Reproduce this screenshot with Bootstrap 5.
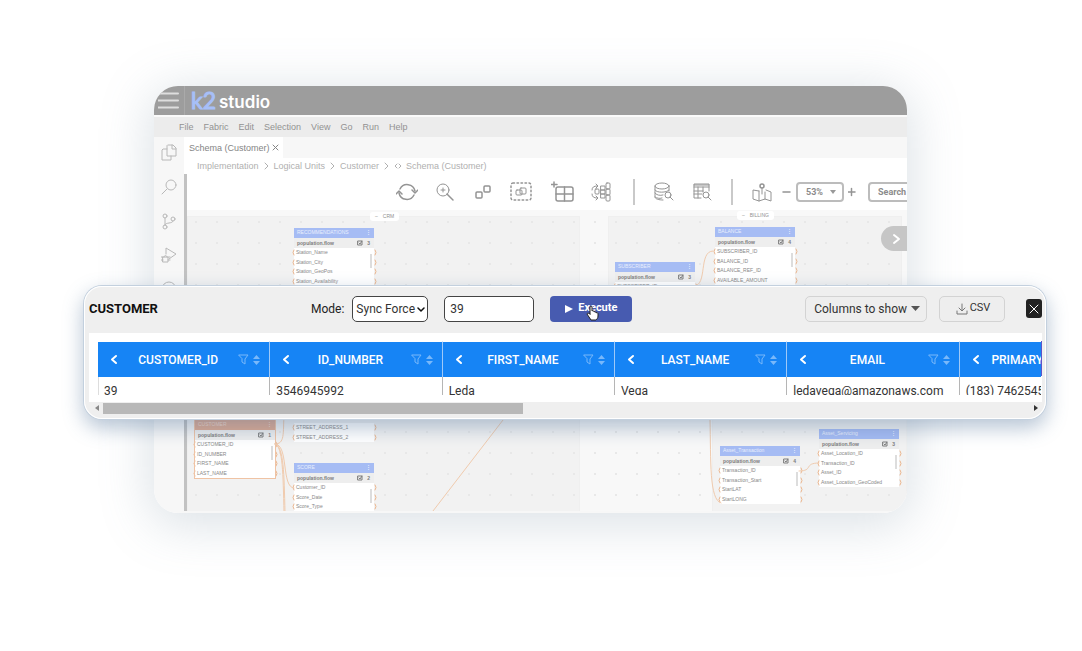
<!DOCTYPE html>
<html lang="en">
<head>
<meta charset="utf-8">
<meta name="viewport" content="width=device-width, initial-scale=1">
<title>k2 studio - Schema (Customer)</title>
<link href="https://cdn.jsdelivr.net/npm/bootstrap@5.3.0/dist/css/bootstrap.min.css" rel="stylesheet">
<style>
  body { background: #fff; font-family: Roboto, sans-serif; overflow-x: hidden; }
  svg { display: block; fill: none; stroke: currentColor; stroke-width: 1; stroke-linecap: round; stroke-linejoin: round; }
  button, input, select { font-family: inherit; }
  .stage { padding: 86px 0 138px; }

  /* faded studio window */
  .studio-glow { border-radius: 24px; margin: 0 175px 0 154px; box-shadow: 0 8px 50px 4px rgba(115, 140, 160, .26); }
  .studio { height: 427px; border-radius: 24px; overflow: hidden; background: #f7f7f7; font-family: "Liberation Sans", sans-serif; font-size: 9px; line-height: 12px; color: #929292; }
  .topbar { height: 29px; background: #9d9d9d; color: #fff; }
  .burger { width: 31px; border: solid #aaa; color: #dedede; border-width: 0 1px 0 0; background: none; padding: 0 0 0 4px; }
  .logo-k { font: 400 23px/29px Lato, sans-serif; color: #a7bff8; -webkit-text-stroke: 1px #a7bff8; }
  .logo-s { font: 600 17px/32px Inter, sans-serif; color: #fff; }
  .logo-row { padding-left: 6px; gap: 3px; }
  .menubar { height: 22px; background: #ececec; border-top: 2px solid #fafafa; padding-left: 25px; gap: 10px; }
  .menubar a, .crumbs a { color: inherit; text-decoration: none; }
  .rail { width: 30px; padding-top: 6px; gap: 13px; color: #b8b8b8; }
  .rail button { border: 0; background: none; padding: 0; color: inherit; }
  .main-col { min-width: 0; }
  .tabstrip { height: 21px; }
  .tab-on { background: #fff; width: 99px; padding: 0 4px 0 5px; color: #858585; }
  .crumbs { height: 16px; padding-left: 13px; color: #b0b0b0; gap: 5px; background: #fff; }
  .work { border-left: 3px solid #c2c2c2; }
  .tools { height: 36px; background: #fff; padding-left: 206px; color: #949494; gap: 6px; }
  .tools button { border: 0; background: none; padding: 0; color: inherit; display: flex; justify-content: center; }
  .icon-row { gap: 10px; }
  .zoom-row { gap: 4px; }
  .icon-btn { width: 28px; }
  .step-btn { width: 10px; }
  .rule { width: 2px; height: 26px; background: #c9c9c9; margin: 0 5px; }
  .zoom-sel, .find { height: 20px; border: 2px solid #bcbcbc; border-radius: 4px; background: #fff; color: #8c8c8c; font: 700 9px/12px Roboto, sans-serif; padding: 0 8px; }
  .zoom-sel { width: 48px; appearance: none; }
  .find { width: 80px; }
  .find::placeholder { color: #8c8c8c; opacity: 1; }
  .caret { right: 8px; top: 8px; border: 3px solid transparent; border-top: 4px solid #999; border-bottom: 0; }

  /* schema canvas: free placement of entity nodes */
  .board { height: 301px; background: #f8f8f8; }
  .zone { background: #f2f2f2; border: 1px solid #efefef; }
  .zone-a { left: 0; top: 6px; width: 393px; height: 300px; }
  .zone-b { left: 421px; top: 6px; right: 5px; height: 160px; }
  .zone-c { left: 525px; top: 166px; right: 0; height: 140px; }
  .dots { background: radial-gradient(circle at 9px 12px, #e8e8e8 0, #e8e8e8 1px, transparent 1px) 0 0 / 21px 21px; }
  .zone-tag { background: #fff; border-radius: 3px; font: 5px/9px "Liberation Sans", sans-serif; color: #909090; padding: 0 5px; gap: 5px; height: 9px; }
  .entity { width: 80px; background: #fff; font: 5px/9px "Liberation Sans", sans-serif; color: #888; }
  .entity-head { height: 10px; background: #a6bcf4; color: #e9effd; padding: 0 3px; }
  .entity-flow { height: 10px; background: #eee; font-weight: 700; color: #7d7d7d; padding: 0 4px 0 3px; }
  .entity-rows { height: 38px; }
  .entity-rows div { padding-left: 2px; flex: 0 0 25%; display: flex; align-items: center; justify-content: space-between; }
  .entity-part .entity-rows { height: 19px; }
  .entity-part .entity-rows div { flex-basis: 50%; }
  .entity-part .entity-head, .entity-part .entity-flow, .entity-part .entity-bar { display: none !important; }
  .entity-rows svg { color: #ebb68f; margin: 0 -3px; }
  .entity-rows svg:first-child { margin: 0 1px 0 -4px; }
  .entity-bar { right: 2px; bottom: 18px; width: 2px; height: 14px; background: #ddd; }
  .entity-hot { outline: 1px solid #efc3a4; }
  .entity-hot .entity-head { background: #dfaa92; color: #f3d6c6; }
  .edges { left: 0; top: 0; color: #f0cbae; }
  .next-btn { right: 0; top: 16px; width: 26px; height: 25px; border: 0; border-radius: 13px 0 0 13px; background: #c6c6c6; color: #fff; padding: 0 0 0 11px; }

  /* data viewer laid over the window */
  .viewer { left: 84px; right: 36px; top: 286px; height: 133px; padding: 0 4px 0 5px; background: #efefef; border-radius: 18px; box-shadow: inset 0 0 0 1px #fff, 0 0 0 1px #c3d0de, 0 8px 20px 1px rgba(75, 110, 150, .4); overflow: hidden; }
  .viewer-head { height: 47px; padding-bottom: 2px; font-size: 12px; color: #222; }
  .viewer-head h1 { font-size: 13px; line-height: 18px; font-weight: 700; color: #111; width: 222px; }
  .mode-sel, .key-box { height: 26px; border: 1px solid #444; border-radius: 5px; background: #fff; color: #333; font-size: 12px; padding: 0 5px; }
  .mode-sel { width: 76px; appearance: none; padding: 0 0 0 3px; }
  .mode-tick { right: 3px; top: 10px; color: #111; }
  .key-box { width: 90px; margin: 0 16px; }
  .run-btn { width: 82px; height: 26px; border: 0; border-radius: 4px; background: #475bb0; color: #fff; font-size: 11px; font-weight: 700; padding: 0; gap: 4px; }
  .hand { left: 36px; top: 9px; }
  .ghost { height: 26px; border: 1px solid #d3d3d3; border-radius: 5px; background: #eee; color: #333; padding: 0 6px 0 8px; gap: 4px; font-size: 12px; }
  .csv-btn { width: 66px; margin: 0 21px 0 12px; gap: 2px; font-size: 11px; }
  .close-btn { width: 16px; height: 19px; border: 0; border-radius: 3px; background: #222; color: #fff; padding: 0; }
  .sheet { background: #fff; padding: 8px 0 0 9px; height: 69px; }
  .sheet-clip { height: 54px; overflow: hidden; border-right: 1px solid; border-image: linear-gradient(#5d55c9 35px, transparent 35px) 1; }
  .sheet table { table-layout: fixed; width: 1034px; font-size: 12px; color: #333; margin: 0; border-collapse: separate; border-spacing: 0; }
  .sheet th { height: 36px; padding: 0; background: #1684f5; color: #fff; font-weight: 500; border-right: 1px solid #9fc9f8; border-top: 1px solid #fff; }
  .sheet th button { border: 0; background: none; color: #fff; padding: 0; }
  .col-in { padding: 0 9px 0 12px; }
  .sheet th .soft { color: #79b8fa; }
  .sheet td { height: 28px; padding: 0 6px; border-right: 1px solid #b5b5b5; }
  .sheet td:first-child { box-shadow: inset 1px 0 #ddd; }
  .scroller { height: 12px; padding: 0 4px 0 6px; }
  .scroller i { border: 3px solid transparent; border-width: 3px 4px; }
  .to-left { border-right-color: #888 !important; border-left-width: 0 !important; }
  .to-right { border-left-color: #333 !important; border-right-width: 0 !important; }
  .thumb { width: 100%; max-width: 420px; height: 11px; background: #b8b8b8; margin-left: 4px; }
</style>
</head>
<body>
<main class="stage position-relative">
  <div class="studio-glow">
  <section class="studio d-flex flex-column">
    <header class="topbar d-flex">
      <button class="burger" aria-label="Menu"><svg width="21" height="29"><path d="M0 7.500h20M0 14.500h20M0 21.500h20" stroke-width="2"/></svg></button>
      <div class="logo-row d-flex"><span class="logo-k">k2</span><span class="logo-s">studio</span></div>
    </header>
    <nav class="menubar d-flex align-items-center">
      <a href="#">File</a><a href="#">Fabric</a><a href="#">Edit</a><a href="#">Selection</a><a href="#">View</a><a href="#">Go</a><a href="#">Run</a><a href="#">Help</a>
    </nav>
    <div class="d-flex flex-fill">
      <aside class="rail d-flex flex-column align-items-center flex-shrink-0">
        <button aria-label="Files"><svg width="16" height="21"><path d="M7 2h5l3 3v8H6V3zM11 2v4h4M6 6H2L1 7v10h9v-4"/></svg></button>
        <button aria-label="Search"><svg width="16" height="21"><circle cx="10" cy="8" r="5"/><path d="M6 12l-5 5"/></svg></button>
        <button aria-label="Branches"><svg width="16" height="21"><circle cx="4" cy="5" r="2"/><circle cx="12" cy="8" r="2"/><circle cx="4" cy="16" r="2"/><path d="M4 7v7M12 10c0 3-8 1-8 4"/></svg></button>
        <button aria-label="Debug"><svg width="16" height="21"><path d="M5 9V3l10 6-7 5"/><path d="M2 12h5v5H2zM0 12h2M0 15h2M7 12h2M7 15h2M3 12c0-2 3-2 3 0"/></svg></button>
        <button aria-label="Extensions"><svg width="16" height="21"><circle cx="8" cy="10" r="7"/></svg></button>
      </aside>
      <div class="main-col flex-fill">
        <div class="tabstrip d-flex"><div class="tab-on d-flex align-items-center justify-content-between"><span>Schema (Customer)</span><svg width="7" height="7"><path d="M1 1l5 5M6 1l-5 5"/></svg></div></div>
        <nav class="crumbs d-flex align-items-center">
          <a href="#">Implementation</a><svg width="5" height="8"><path d="M1 1l3 3-3 3"/></svg>
          <a href="#">Logical Units</a><svg width="5" height="8"><path d="M1 1l3 3-3 3"/></svg>
          <a href="#">Customer</a><svg width="5" height="8"><path d="M1 1l3 3-3 3"/></svg>
          <svg width="7" height="8"><path d="M3 2L1 4l2 2M5 2l2 2-2 2"/></svg><a href="#">Schema (Customer)</a>
        </nav>
        <div class="work">
          <div class="tools d-flex align-items-center">
            <div class="icon-row d-flex align-items-center">
              <button class="icon-btn" aria-label="Refresh"><svg width="22" height="20"><path d="M4 7a8 8 0 0 1 15 2M18 13a8 8 0 0 1-15-2" stroke-width="1.500"/><path d="M0 12l3-3 3 3M16 8l3 3 3-3" stroke-width="1.500"/></svg></button>
              <button class="icon-btn" aria-label="Zoom in"><svg width="20" height="20"><circle cx="8" cy="8" r="6"/><path d="M12 12l6 6" stroke-width="1.500"/><path d="M6 8h4M8 6v4"/></svg></button>
              <button class="icon-btn" aria-label="Arrange"><svg width="18" height="20"><rect x="2" y="10" width="6" height="6" rx="1" stroke-width="1.500"/><rect x="10" y="4" width="6" height="6" rx="1" stroke-width="1.500"/></svg></button>
              <button class="icon-btn" aria-label="Group"><svg width="22" height="20"><rect x="1" y="1" width="20" height="17" rx="2" stroke-width="1.500" stroke-dasharray="1.500 2.500"/><rect x="6" y="8" width="6" height="5" rx="1"/><rect x="10" y="6" width="6" height="6" rx="1"/></svg></button>
              <button class="icon-btn ms-1" aria-label="Add table"><svg width="24" height="22"><rect x="5" y="6" width="17" height="14" rx="2" stroke-width="1.500"/><path d="M5 13h17M13.500 6v14M3 1v5M0 3.500h6" stroke-width="1.500"/></svg></button>
              <button class="icon-btn" aria-label="Auto layout"><svg width="22" height="20"><rect x="5" y="7" width="4" height="5" rx="1"/><rect x="11" y="4" width="4" height="4"/><rect x="11" y="8" width="4" height="4"/><rect x="11" y="12" width="4" height="4"/><rect x="16" y="1" width="4" height="6" rx="1"/><rect x="16" y="7" width="4" height="6" rx="1"/><rect x="16" y="13" width="4" height="6" rx="1"/><path d="M2 8c0-3 2-4 5-4M6 2l2 2-2 2M2 12c0 3 2 4 5 4M6 14l2 2-2 2"/></svg></button>
              <span class="rule ms-2"></span>
              <button class="icon-btn" aria-label="Query database"><svg width="20" height="20"><ellipse cx="8" cy="4" rx="7" ry="3"/><path d="M1 4v11c0 2 4 3 8 3M15 4v5M1 8c1 3 12 3 14 0M1 11c1 2 5 3 8 2M1 15c2 1 4 2 7 1"/><circle cx="14" cy="13" r="3"/><path d="M16 15l3 3"/></svg></button>
              <button class="icon-btn" aria-label="Query table"><svg width="20" height="20"><path d="M9 16H2V2h15v7M2 5h15M2 9h9M2 12h8M6 5v11M11 5v5"/><path d="M2 3h15"/><circle cx="14" cy="13" r="3"/><path d="M16 15l3 3"/></svg></button>
              <span class="rule"></span>
              <button class="icon-btn" aria-label="Map"><svg width="20" height="20"><circle cx="10" cy="4" r="2" stroke-width="1.500"/><path d="M10 6v6M7 9L1 8v9l6 2 6-2 6 2V10l-5-2M7 9v10M13 10v7"/></svg></button>
            </div>
            <div class="zoom-row d-flex align-items-center">
              <button class="step-btn" aria-label="Zoom out"><svg width="10" height="10"><path d="M1 5h7" stroke-width="1.500"/></svg></button>
              <div class="position-relative"><select class="zoom-sel d-block" aria-label="Zoom level"><option>53%</option></select><span class="caret position-absolute"></span></div>
              <button class="step-btn" aria-label="Zoom in"><svg width="10" height="10"><path d="M0 5h7M3.500 1.500v7" stroke-width="1.500"/></svg></button>
            </div>
            <input class="find ms-1 flex-shrink-0" placeholder="Search" aria-label="Search">
          </div>
          <div class="board position-relative overflow-hidden">
            <div class="zone zone-a position-absolute"></div>
            <div class="zone zone-b position-absolute"></div>
            <div class="zone zone-c position-absolute"></div>
            <div class="dots position-absolute top-0 start-0 w-100 h-100"></div>
            <div class="zone-tag d-flex position-absolute" style="left:183px;top:2px"><span>–</span><span>CRM</span></div>
            <div class="zone-tag d-flex position-absolute" style="left:550px;top:1px"><span>–</span><span>BILLING</span></div>
            <svg class="edges position-absolute" width="720" height="301">
              <path d="M507 76c14 0 4-35 19-35"/>
              <path d="M88 234c10 0 8-10 9-30M88 234c14 0 6 44 19 44M88 234c8 2 8 30 9 68M88 234c9 2 9 30 10 68"/>
              <path d="M316 210L246 301M523 210c1 40-1 80 11 83"/>
              <path d="M612 261c15 0 4-8 20-8"/>
            </svg>
            <button class="next-btn position-absolute" aria-label="Next"><svg width="10" height="12"><path d="M2 2l5 4-5 4" stroke-width="2"/></svg></button>
          </div>
        </div>
      </div>
    </div>
  </section>
  </div>

  <section class="viewer position-absolute">
    <div class="viewer-head d-flex align-items-center">
      <h1 class="mb-0">CUSTOMER</h1>
      <label for="mode" class="me-2">Mode:</label>
      <div class="position-relative"><select id="mode" class="mode-sel d-block"><option>Sync Force</option></select><svg class="mode-tick position-absolute" width="9" height="7"><path d="M2 2l3 3 3-3" stroke-width="1.500"/></svg></div>
      <input class="key-box" value="39" aria-label="Instance">
      <button class="run-btn position-relative d-flex align-items-center justify-content-center"><svg width="9" height="8"><path d="M0 0v8l8-4z" fill="currentColor" stroke="none"/></svg>Execute
        <svg class="hand position-absolute" width="13" height="16"><path d="M4 9V2c0-1 2-1 2 0v4c1-1 2 0 2 1 1-1 2 0 2 1 1-1 2 0 2 1v2c0 2-1 3-2 4H5c-1-2-3-4-4-6 0-1 2-1 3 0z" fill="#fff" stroke="#222"/></svg></button>
      <button class="ghost ms-auto d-flex align-items-center"><span>Columns to show</span><svg width="9" height="5"><path d="M0 0h9L4.500 5z" fill="#555" stroke="none"/></svg></button>
      <button class="ghost csv-btn d-flex align-items-center justify-content-center"><svg width="12" height="12" color="#777"><path d="M6 1v6M3 5l3 3 3-3M1 8v3h10V8"/></svg>CSV</button>
      <button class="close-btn d-flex align-items-center justify-content-center" aria-label="Close"><svg width="10" height="10"><path d="M1 1l8 8M9 1L1 9"/></svg></button>
    </div>
    <div class="sheet"><div class="sheet-clip">
      <table>
        <thead><tr id="cols"></tr></thead>
        <tbody><tr><td>39</td><td>3546945992</td><td>Leda</td><td>Vega</td><td>ledavega@amazonaws.com</td><td>(183) 7462545</td></tr></tbody>
      </table>
    </div></div>
    <div class="scroller d-flex align-items-center"><i class="to-left"></i><span class="thumb"></span><i class="to-right ms-auto"></i></div>
  </section>
</main>
<script>
  // column headers
  const names = ['CUSTOMER_ID', 'ID_NUMBER', 'FIRST_NAME', 'LAST_NAME', 'EMAIL', 'PRIMARY_PHONE'];
  document.getElementById('cols').innerHTML = names.map(n => `<th><div class="col-in d-flex align-items-center">
    <button aria-label="Collapse"><svg width="8" height="11"><path d="M6 2L2 5.500l4 3.500" stroke-width="2"/></svg></button>
    <span class="flex-fill text-center">${n}</span>
    <button class="soft" aria-label="Filter"><svg width="11" height="11"><path d="M1 1h9L7 5v5L4 8V5z"/></svg></button>
    <button class="soft ms-1" aria-label="Sort"><svg width="7" height="12"><path d="M0 5l3.500-4L7 5zM0 7l3.500 4L7 7z" fill="currentColor" stroke="none"/></svg></button></div></th>`).join('');

  // schema entities: x, y, title, flow count, fields, variant
  const entities = [
    [107, 18, 'RECOMMENDATIONS', 3, ['Station_Name', 'Station_City', 'Station_GeoPos', 'Station_Availability']],
    [428, 52, 'SUBSCRIBER', 3, ['SUBSCRIBER_ID']],
    [528, 17, 'BALANCE', 4, ['SUBSCRIBER_ID', 'BALANCE_ID', 'BALANCE_REF_ID', 'AVAILABLE_AMOUNT']],
    [8, 210, 'CUSTOMER', 1, ['CUSTOMER_ID', 'ID_NUMBER', 'FIRST_NAME', 'LAST_NAME'], 'entity-hot'],
    [107, 213, '', '', ['STREET_ADDRESS_1', 'STREET_ADDRESS_2'], 'entity-part'],
    [107, 253, 'SCORE', 2, ['Customer_ID', 'Score_Date', 'Score_Type']],
    [533, 236, 'Asset_Transaction', 4, ['Transaction_ID', 'Transaction_Start', 'StartLAT', 'StartLONG']],
    [632, 219, 'Asset_Servicing', 3, ['Asset_Location_ID', 'Transaction_ID', 'Asset_ID', 'Asset_Location_GeoCoded']]
  ];
  const L = '<svg width="3" height="7"><path d="M2 1L1 3.500 2 6"/></svg>', R = '<svg width="3" height="7"><path d="M1 1l1 2.500L1 6"/></svg>';
  document.querySelector('.edges').insertAdjacentHTML('beforebegin', entities.map(([x, y, t, c, f, k]) => `
    <div class="entity position-absolute ${k || ''}" style="left:${x}px;top:${y}px">
      <div class="entity-head d-flex justify-content-between"><span>${t}</span><b>⋮</b></div>
      <div class="entity-flow d-flex align-items-center"><span>population.flow</span><svg class="ms-auto me-1" width="6" height="6"><path d="M1 1h4v4H1zM2 3l1 1 2-3"/></svg><span>${c}</span></div>
      <div class="entity-rows d-flex flex-column">${f.map(n => `<div>${L}<span class="me-auto">${n}</span>${R}</div>`).join('')}</div>
      <span class="entity-bar position-absolute"></span>
    </div>`).join(''));
</script>
<script src="https://cdn.jsdelivr.net/npm/bootstrap@5.3.0/dist/js/bootstrap.bundle.min.js"></script>
</body>
</html>
